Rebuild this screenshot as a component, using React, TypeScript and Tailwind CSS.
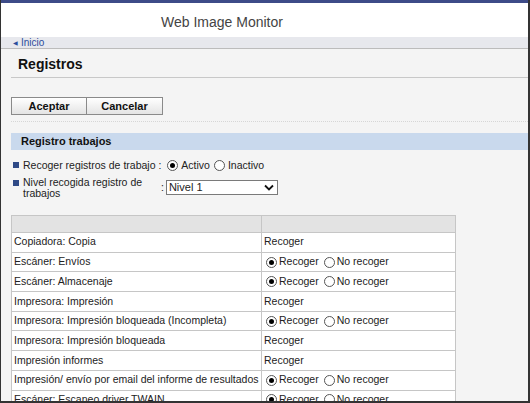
import React from 'react'

const font = { fontFamily: '"Liberation Sans", Arial, sans-serif' }

type Row = { label: string; choice: boolean }

const rows: Row[] = [
  { label: 'Copiadora: Copia', choice: false },
  { label: 'Escáner: Envíos', choice: true },
  { label: 'Escáner: Almacenaje', choice: true },
  { label: 'Impresora: Impresión', choice: false },
  { label: 'Impresora: Impresión bloqueada (Incompleta)', choice: true },
  { label: 'Impresora: Impresión bloqueada', choice: false },
  { label: 'Impresión informes', choice: false },
  { label: 'Impresión/ envío por email del informe de resultados', choice: true },
  { label: 'Escáner: Escaneo driver TWAIN', choice: true },
]

function Radio({ checked }: { checked?: boolean }) {
  return (
    <span className="inline-flex h-[11px] w-[11px] shrink-0 items-center justify-center rounded-full border border-[#555] bg-white">
      {checked && <span className="h-[5px] w-[5px] rounded-full bg-black" />}
    </span>
  )
}

function Bullet() {
  return <span className="mt-[3px] h-[6px] w-[6px] shrink-0 bg-[#2f4a86]" />
}

export default function App() {
  return (
    <div
      className="relative h-[403px] w-[530px] overflow-hidden border-b-2 border-l border-r-2 border-[#333] bg-[#f4f4f4] text-[10.5px] text-[#222]"
      style={font}
    >
      <div className="h-[3px] bg-[#3d4b88]" />
      <div className="flex h-[34px] items-center bg-white pl-[160px] pt-[4px] text-[14px] text-[#444]">
        Web Image Monitor
      </div>
      <div className="flex h-[12px] items-center border-b border-[#bcbcbc] bg-[#e7e8ed] pl-[12px] text-[10px] leading-none text-[#2c4c9c]">
        <span className="mr-[3px] text-[6px]">◀</span>
        Inicio
      </div>

      <div className="pl-[10px]">
        <div className="flex h-[29px] items-center border-b border-[#c8c8c8] pl-[7px] pt-[2px] text-[14px] font-bold text-[#111]">
          Registros
        </div>

        <div className="flex h-[44px] items-end border-b border-dotted border-[#d6d6d6] pb-[6px]">
          <div className="flex">
            <button className="h-[18px] w-[76px] border border-[#8a8a8a] bg-gradient-to-b from-white to-[#e4e4e4] text-[11px] font-bold text-[#111]">
              Aceptar
            </button>
            <button className="h-[18px] w-[76px] border border-l-0 border-[#8a8a8a] bg-gradient-to-b from-white to-[#e4e4e4] text-[11px] font-bold text-[#111]">
              Cancelar
            </button>
          </div>
        </div>

        <div className="mt-[11px] flex h-[17px] items-center bg-[#c9d9ed] pl-[10px] text-[11px] font-bold text-[#111]">
          Registro trabajos
        </div>

        <div className="mt-[9px] flex items-start gap-[4px] pl-[2px] leading-[13px]">
          <Bullet />
          <span>Recoger registros de trabajo :</span>
          <span className="ml-[2px] flex items-center gap-[3px]">
            <Radio checked />
            Activo
          </span>
          <span className="flex items-center gap-[3px]">
            <Radio />
            Inactivo
          </span>
        </div>

        <div className="mt-[5px] flex items-start pl-[2px] leading-[11px]">
          <Bullet />
          <span className="ml-[4px] w-[138px]">
            Nivel recogida registro de
            <br />
            trabajos
          </span>
          <span className="mt-[3px] flex items-center gap-[2px]">
            :
            <span className="flex h-[15px] w-[112px] items-center justify-between border border-[#7a7a7a] bg-white pl-[2px] pr-[3px] text-[11px]">
              Nivel 1
              <svg width="10" height="7" viewBox="0 0 10 7">
                <path d="M1 1.5 L5 5.5 L9 1.5" fill="none" stroke="#111" strokeWidth="1.8" />
              </svg>
            </span>
          </span>
        </div>

        <table className="mt-[16px] w-[445px] table-fixed border-collapse border border-[#bdbdbd]">
          <colgroup>
            <col className="w-[250px]" />
            <col />
          </colgroup>
          <tbody>
            <tr className="h-[17px] bg-[#e3e3e3]">
              <td className="border border-[#c6c6c6]" />
              <td className="border border-[#c6c6c6]" />
            </tr>
            {rows.map((r) => (
              <tr key={r.label} className="h-[19.7px] bg-white">
                <td className="overflow-hidden whitespace-nowrap border border-[#c6c6c6] px-[2px]">{r.label}</td>
                <td className="border border-[#c6c6c6] px-[2px]">
                  {r.choice ? (
                    <span className="flex items-center gap-[2px] pl-[2px]">
                      <Radio checked />
                      Recoger
                      <span className="w-[1px]" />
                      <Radio />
                      No recoger
                    </span>
                  ) : (
                    'Recoger'
                  )}
                </td>
              </tr>
            ))}
          </tbody>
        </table>
      </div>
    </div>
  )
}
